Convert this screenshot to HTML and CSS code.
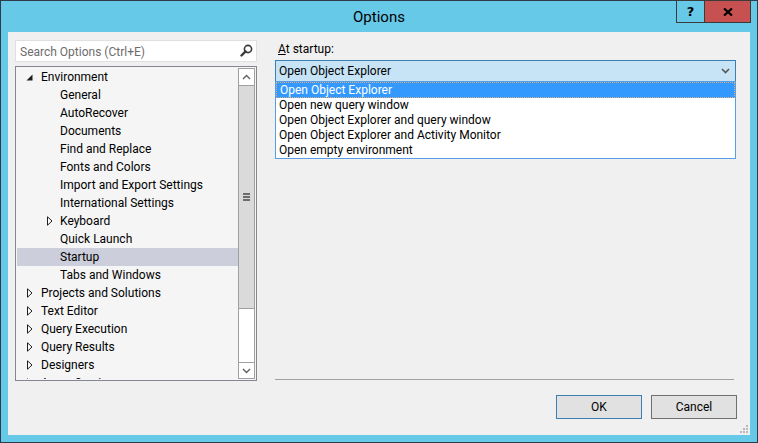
FILE: index.html
```html
<!DOCTYPE html>
<html>
<head>
<meta charset="utf-8">
<link rel="stylesheet" href="styles.css">
</head>
<body>
<div class="window">
  <div class="titlebar">
    <div class="title">Options</div>
    <div class="caption-buttons">
      <div class="cap-btn help">?</div>
      <div class="cap-btn close">
        <svg width="10" height="8" viewBox="0 0 10 8"><path d="M1 0.5 L9 7.5 M9 0.5 L1 7.5" stroke="#000" stroke-width="2.2" fill="none"/></svg>
      </div>
    </div>
  </div>
  <div class="client">
    <div class="left">
      <div class="search">
        <span class="search-ph">Search Options (Ctrl+E)</span>
        <svg class="search-ico" width="13" height="13" viewBox="0 0 13 13"><circle cx="8" cy="5" r="3.6" stroke="#3a3a3a" stroke-width="1.6" fill="none"/><path d="M5.6 7.4 L1.5 11.5" stroke="#3a3a3a" stroke-width="2.4" stroke-linecap="round"/></svg>
      </div>
      <div class="tree">
        <div class="rows">
          <div class="row l0"><span class="exp"><svg width="7" height="7" viewBox="0 0 7 7"><polygon points="6.5,0.5 6.5,6.5 0.5,6.5" fill="#1e1e1e"/></svg></span><span>Environment</span></div>
          <div class="row l1"><span class="exp"></span><span>General</span></div>
          <div class="row l1"><span class="exp"></span><span>AutoRecover</span></div>
          <div class="row l1"><span class="exp"></span><span>Documents</span></div>
          <div class="row l1"><span class="exp"></span><span>Find and Replace</span></div>
          <div class="row l1"><span class="exp"></span><span>Fonts and Colors</span></div>
          <div class="row l1"><span class="exp"></span><span>Import and Export Settings</span></div>
          <div class="row l1"><span class="exp"></span><span>International Settings</span></div>
          <div class="row l1"><span class="exp col"><svg width="6" height="10" viewBox="0 0 6 10"><polygon points="0.5,0.8 5,5 0.5,9.2" fill="#fff" stroke="#1e1e1e" stroke-width="1"/></svg></span><span>Keyboard</span></div>
          <div class="row l1"><span class="exp"></span><span>Quick Launch</span></div>
          <div class="row l1 sel"><span class="exp"></span><span>Startup</span></div>
          <div class="row l1"><span class="exp"></span><span>Tabs and Windows</span></div>
          <div class="row l0"><span class="exp col"><svg width="6" height="10" viewBox="0 0 6 10"><polygon points="0.5,0.8 5,5 0.5,9.2" fill="#fff" stroke="#1e1e1e" stroke-width="1"/></svg></span><span>Projects and Solutions</span></div>
          <div class="row l0"><span class="exp col"><svg width="6" height="10" viewBox="0 0 6 10"><polygon points="0.5,0.8 5,5 0.5,9.2" fill="#fff" stroke="#1e1e1e" stroke-width="1"/></svg></span><span>Text Editor</span></div>
          <div class="row l0"><span class="exp col"><svg width="6" height="10" viewBox="0 0 6 10"><polygon points="0.5,0.8 5,5 0.5,9.2" fill="#fff" stroke="#1e1e1e" stroke-width="1"/></svg></span><span>Query Execution</span></div>
          <div class="row l0"><span class="exp col"><svg width="6" height="10" viewBox="0 0 6 10"><polygon points="0.5,0.8 5,5 0.5,9.2" fill="#fff" stroke="#1e1e1e" stroke-width="1"/></svg></span><span>Query Results</span></div>
          <div class="row l0"><span class="exp col"><svg width="6" height="10" viewBox="0 0 6 10"><polygon points="0.5,0.8 5,5 0.5,9.2" fill="#fff" stroke="#1e1e1e" stroke-width="1"/></svg></span><span>Designers</span></div>
          <div class="row l0"><span class="exp col"><svg width="6" height="10" viewBox="0 0 6 10"><polygon points="0.5,0.8 5,5 0.5,9.2" fill="#fff" stroke="#1e1e1e" stroke-width="1"/></svg></span><span>Azure Services</span></div>
        </div>
        <div class="scrollbar">
          <div class="sb-btn up"><svg width="9" height="6" viewBox="0 0 9 6"><path d="M1 5 L4.5 1.5 L8 5" stroke="#606060" stroke-width="1.4" fill="none"/></svg></div>
          <div class="thumb"><div class="grip"><i></i><i></i><i></i></div></div>
          <div class="track"></div>
          <div class="sb-btn down"><svg width="9" height="6" viewBox="0 0 9 6"><path d="M1 1 L4.5 4.5 L8 1" stroke="#606060" stroke-width="1.4" fill="none"/></svg></div>
        </div>
      </div>
    </div>
    <div class="right">
      <div class="label"><u>A</u>t startup:</div>
      <div class="combo-wrap">
        <div class="combo">
          <span>Open Object Explorer</span>
          <svg class="combo-arrow" width="9" height="6" viewBox="0 0 9 6"><path d="M1 1 L4.5 4.5 L8 1" stroke="#555" stroke-width="1.6" fill="none"/></svg>
        </div>
        <div class="dropdown">
          <div class="opt first active">Open Object Explorer</div>
          <div class="opt">Open new query window</div>
          <div class="opt">Open Object Explorer and query window</div>
          <div class="opt">Open Object Explorer and Activity Monitor</div>
          <div class="opt">Open empty environment</div>
        </div>
      </div>
      <div class="separator"></div>
      <div class="buttons">
        <div class="btn default">OK</div>
        <div class="btn">Cancel</div>
      </div>
    </div>
    <svg class="grip-corner" width="8" height="8" viewBox="0 0 8 8">
      <rect x="6" y="0" width="2" height="2" fill="#b8b8b8"/>
      <rect x="3" y="3" width="2" height="2" fill="#b8b8b8"/>
      <rect x="6" y="3" width="2" height="2" fill="#b8b8b8"/>
      <rect x="0" y="6" width="2" height="2" fill="#b8b8b8"/>
      <rect x="3" y="6" width="2" height="2" fill="#b8b8b8"/>
      <rect x="6" y="6" width="2" height="2" fill="#b8b8b8"/>
    </svg>
  </div>
</div>
</body>
</html>
```

FILE: styles.css
```css
* { box-sizing: border-box; }
html, body {
  margin: 0;
  padding: 0;
  background: #2d3b4a;
}
body {
  font-family: Roboto, "Open Sans", sans-serif;
  font-size: 12px;
  color: #000;
}
.window {
  width: 758px;
  height: 443px;
  border: 1px solid #2d3b4a;
  background: #66c9e8;
  display: flex;
  flex-direction: column;
  position: relative;
}
.titlebar {
  height: 31px;
  display: flex;
  align-items: center;
  justify-content: center;
}
.title {
  font-size: 15px;
  line-height: 31px;
  padding-top: 1px;
}
.caption-buttons {
  position: absolute;
  top: -1px;
  right: 6px;
  display: flex;
}
.cap-btn {
  height: 23px;
  border: 1px solid #3b3b3b;
  display: flex;
  align-items: center;
  justify-content: center;
}
.help {
  width: 29px;
  font-weight: bold;
  font-size: 13px;
  font-family: "DejaVu Sans", sans-serif;
}
.close {
  width: 47px;
  margin-left: -1px;
  background: #c75050;
}
.client {
  flex: 1;
  margin: 0 7px 7px 7px;
  background: #f0f0f0;
  padding: 8px 13px 16px 7px;
  display: flex;
  gap: 18px;
  position: relative;
}
.left {
  width: 242px;
  display: flex;
  flex-direction: column;
  gap: 4px;
}
.search {
  height: 22px;
  background: #fff;
  border: 1px solid #e0e0e0;
  display: flex;
  align-items: center;
  justify-content: space-between;
  padding: 1px 3px 0 4px;
}
.search-ph {
  color: #6d6d6d;
}
.search-ico { margin-top: -2px; }
.tree {
  height: 315px;
  border: 1px solid #828790;
  background: #f5f5f5;
  padding: 1px;
  display: flex;
}
.rows {
  flex: 1;
  overflow: hidden;
}
.row {
  height: 18px;
  line-height: 18px;
  display: flex;
  align-items: center;
  white-space: nowrap;
}
.row.l0 { padding-left: 8px; }
.row.l1 { padding-left: 27px; }
.row.sel { background: #cccedb; }
.exp {
  width: 16px;
  height: 18px;
  display: flex;
  align-items: center;
  padding-left: 1px;
}
.exp.col { padding-left: 2px; }
.row.l1 .exp.col { padding-left: 3px; }
.scrollbar {
  width: 17px;
  border: 1px solid #a0a0a0;
  display: flex;
  flex-direction: column;
  background: #fff;
}
.sb-btn {
  height: 16px;
  display: flex;
  align-items: center;
  justify-content: center;
  background: #fff;
}
.sb-btn.up { height: 17px; border-bottom: 1px solid #a0a0a0; }
.sb-btn.down { border-top: 1px solid #a0a0a0; }
.thumb {
  height: 223px;
  background: #dadada;
  border-bottom: 1px solid #a0a0a0;
  display: flex;
  align-items: center;
  justify-content: center;
}
.grip {
  display: flex;
  flex-direction: column;
  gap: 1px;
}
.grip i {
  display: block;
  width: 7px;
  height: 2px;
  background: #6d6d6d;
}
.track { flex: 1; }
.right {
  width: 462px;
  display: flex;
  flex-direction: column;
}
.label {
  height: 16px;
  line-height: 16px;
  padding-left: 3px;
  padding-top: 1px;
}
.combo-wrap {
  position: relative;
  margin-top: 4px;
  margin-right: 1px;
}
.combo {
  height: 22px;
  border: 1px solid #3c7fb1;
  background: #c6e4f6;
  display: flex;
  align-items: center;
  justify-content: space-between;
  padding: 0 5px 0 3px;
}
.dropdown {
  position: absolute;
  left: 0;
  right: 0;
  top: 21px;
  background: #fff;
  border: 1px solid #569de5;
  z-index: 2;
}
.opt {
  height: 15px;
  line-height: 15px;
  padding-left: 3px;
  white-space: nowrap;
}
.opt.first { height: 16px; line-height: 14px; }
.opt.active {
  background: #3399ff;
  color: #fff;
  border: 1px dotted #d8b080;
}
.separator {
  margin-top: auto;
  height: 1px;
  background: #a0a0a0;
  margin-right: 3px;
}
.buttons {
  margin-top: 15px;
  display: flex;
  justify-content: flex-end;
  gap: 9px;
}
.btn {
  width: 86px;
  height: 24px;
  border: 1px solid #707070;
  background: #e1e1e1;
  display: flex;
  align-items: center;
  justify-content: center;
}
.btn.default { border-color: #3c7fb1; }
.grip-corner {
  position: absolute;
  right: 2px;
  bottom: 2px;
}
```
